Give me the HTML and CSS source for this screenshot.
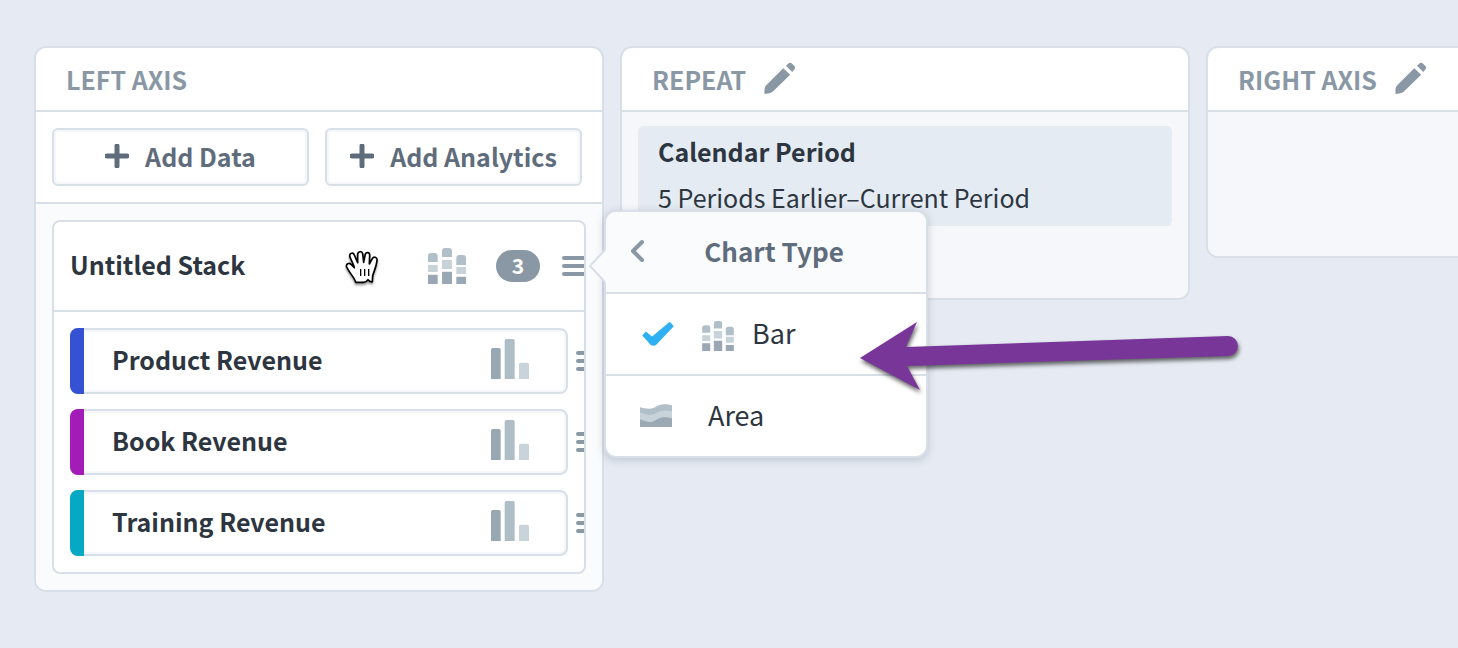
FILE: index.html
```html
<!DOCTYPE html>
<html lang="en">
<head>
  <meta charset="UTF-8" />
  <meta name="viewport" content="width=device-width, initial-scale=1.0" />
  <title>Chart Builder</title>
  <link rel="stylesheet" href="styles.css">
</head>
<body>
  <!-- shared icons -->
  <svg class="sprite" aria-hidden="true">
    <symbol id="plus" viewBox="0 0 24 24">
      <path d="M12 2v20M2 12h20" fill="none" stroke="currentColor" stroke-width="5" stroke-linecap="round" />
    </symbol>
    <symbol id="pencil" viewBox="434 67 93 93">
      <path d="M490 85L510 104L460 153Q456 158 437 160Q434 160 436 143Q437 137 442 133Z" fill="currentColor" />
      <path d="M498 78L505 71Q510 67 515 71L523 79Q527 84 522 89L516 96Z" fill="currentColor" />
    </symbol>
    <symbol id="menu" viewBox="0 0 26 20">
      <path d="M2 2h22M2 10h22M2 18h22" stroke="currentColor" stroke-width="4" stroke-linecap="round" />
    </symbol>
    <symbol id="stacked" viewBox="0 0 114 108">
      <path d="M0 42V24Q0 15 9 15H20Q29 15 29 24V42ZM42 27V9Q42 0 51 0H63Q72 0 72 9V27ZM85 51V30Q85 21 94 21H105Q114 21 114 30V51Z" fill="#b1bfc8" />
      <path d="M0 51H29V72H0ZM42 36H72V63H42ZM85 57H114V78H85Z" fill="#c7d2d9" />
      <path d="M0 80H29V108H0ZM42 71H72V108H42ZM85 86H114V108H85Z" fill="#9aa8b5" />
    </symbol>
    <symbol id="bars" viewBox="0 0 114 120">
      <path d="M0 120V32Q0 27 5 27H24Q29 27 29 32V120Z" fill="#98a8b3" />
      <path d="M41 120V5Q41 0 46 0H66Q71 0 71 5V120Z" fill="#afbdc7" />
      <path d="M84 120V76Q84 71 89 71H109Q114 71 114 76V120Z" fill="#c8d3da" />
    </symbol>
    <symbol id="area" viewBox="0 0 96 69">
      <path d="M0 10Q26 18 42 11C56 4 66-4 96 4V69H0Z" fill="#b1bfc8" />
      <path d="M0 25Q26 38 42 30C56 23 66 15 96 22V69H0Z" fill="#c7d2d9" />
      <path d="M0 46Q26 59 42 51C56 44 66 35 96 43V69H0Z" fill="#9aa9b3" />
    </symbol>
    <symbol id="check" viewBox="126 365 96 73">
      <path d="M126 406L137 394L156 409L208 366Q211 365 213 367L222 378L168 435Q160 440 152 435Z" fill="#2fb0f2" />
    </symbol>
  </svg>

  <main class="board">
    <section class="panel">
      <header class="panel-head">
        <h2>LEFT AXIS</h2>
      </header>
      <div class="toolbar">
        <button class="button"><svg class="i-plus"><use href="#plus" /></svg>Add Data</button>
        <button class="button"><svg class="i-plus"><use href="#plus" /></svg>Add Analytics</button>
      </div>
      <div class="panel-body stacks">
        <div class="stack">
          <div class="stack-head">
            <h3>Untitled Stack</h3>
            <svg class="i-stacked"><use href="#stacked" /></svg>
            <span class="badge">3</span>
            <button class="menu-btn" aria-label="Stack menu"><svg class="i-menu"><use href="#menu" /></svg></button>
            <svg class="hand" viewBox="46 88 102 102">
              <path d="M78 185C77 174 60 158 51 139C48 129 58 125 65 132L74 141C71 128 62 116 60 106C60 96 71 95 74 103L84 126L84 100C86 91 97 91 99 99L102 125L107 100C110 93 121 95 120 104L119 130L128 114C133 106 144 110 142 120C140 140 131 156 129 166L128 183Q121 185 115 177Q109 187 99 185Z" fill="#fff" stroke="#000" stroke-width="5" stroke-linejoin="round" />
              <path d="M93 145V166M105 145V166M117 145V166" stroke="#000" stroke-width="4" />
            </svg>
          </div>
          <ul class="metrics">
            <li class="row">
              <div class="metric blue">Product Revenue<svg class="i-bars"><use href="#bars" /></svg></div>
              <button class="menu-btn" aria-label="Product Revenue menu"><svg class="i-menu"><use href="#menu" /></svg></button>
            </li>
            <li class="row">
              <div class="metric purple">Book Revenue<svg class="i-bars"><use href="#bars" /></svg></div>
              <button class="menu-btn" aria-label="Book Revenue menu"><svg class="i-menu"><use href="#menu" /></svg></button>
            </li>
            <li class="row">
              <div class="metric teal">Training Revenue<svg class="i-bars"><use href="#bars" /></svg></div>
              <button class="menu-btn" aria-label="Training Revenue menu"><svg class="i-menu"><use href="#menu" /></svg></button>
            </li>
          </ul>
        </div>
      </div>

      <div class="popover">
        <svg class="caret" viewBox="0 0 18 36">
          <path d="M18 1L2 18L18 35Z" fill="#fafbfd" />
          <path d="M17 2L2 18L17 34" fill="none" stroke="#d8dfe8" stroke-width="2" />
        </svg>
        <div class="popover-head">
          <button class="back" aria-label="Back">
            <svg viewBox="0 0 14 24"><path d="M12 3L3 12L12 21" fill="none" stroke="currentColor" stroke-width="4" stroke-linecap="round" stroke-linejoin="round" /></svg>
          </button>
          <h3>Chart Type</h3>
        </div>
        <button class="option selected">
          <svg class="i-check"><use href="#check" /></svg>
          <svg class="i-type"><use href="#stacked" /></svg>
          Bar
        </button>
        <button class="option">
          <svg class="i-area"><use href="#area" /></svg>
          Area
        </button>
      </div>
    </section>

    <section class="panel">
      <header class="panel-head">
        <h2>REPEAT</h2>
        <button class="edit" aria-label="Edit repeat"><svg><use href="#pencil" /></svg></button>
      </header>
      <div class="panel-body repeat">
        <div class="period">
          <strong>Calendar Period</strong>
          <span>5 Periods Earlier–Current Period</span>
        </div>
      </div>
    </section>

    <section class="panel">
      <header class="panel-head">
        <h2>RIGHT AXIS</h2>
        <button class="edit" aria-label="Edit right axis"><svg><use href="#pencil" /></svg></button>
      </header>
      <div class="panel-body empty"></div>
    </section>
  </main>

  <svg class="pointer" viewBox="0 0 400 90">
    <path d="M10 48L67 12L56 37L378 26A10 10 0 0 1 378 46L57 56L70 80Z" fill="#783698" />
  </svg>
</body>
</html>
```
FILE: styles.css
```css
* {
  box-sizing: border-box;
}

body {
  margin: 0;
  background: #e6ebf3;
  color: #2d3640;
  font-family: "Noto Sans CJK SC", "Noto Sans", sans-serif;
  font-size: 25px;
  line-height: 36px;
  position: relative;
}

h2, h3, ul {
  margin: 0;
  padding: 0;
  font-size: inherit;
}

button {
  font: inherit;
  color: inherit;
  background: none;
  border: none;
  padding: 0;
  cursor: pointer;
}

svg {
  display: block;
  flex: none;
}

.sprite {
  position: absolute;
  width: 0;
  height: 0;
}

.board {
  display: grid;
  grid-auto-flow: column;
  grid-auto-columns: minmax(570px, 39%);
  gap: 16px;
  align-items: start;
  padding: 46px 0 56px 34px;
  overflow: hidden;
}

.panel {
  position: relative;
  background: #fff;
  border: 2px solid #d8dfe8;
  border-radius: 12px;
}

.panel-head {
  display: flex;
  align-items: center;
  gap: 18px;
  height: 64px;
  padding: 0 30px;
  border-bottom: 2px solid #d8dfe8;
  color: #8a98a6;
}

.edit {
  padding-bottom: 2px;
}

.edit svg {
  width: 32px;
  height: 32px;
}

.toolbar {
  display: flex;
  gap: 16px;
  padding: 16px 20px 16px 16px;
  border-bottom: 2px solid #d8dfe8;
}

.button {
  display: flex;
  flex: 1;
  align-items: center;
  justify-content: center;
  gap: 16px;
  height: 58px;
  padding-bottom: 3px;
  border: 2px solid #d8dfe8;
  border-radius: 6px;
  box-shadow: inset 0 0 0 2px #f5f7fb;
  color: #5f6c7b;
  font-weight: bold;
}

.i-plus {
  width: 24px;
  height: 24px;
}

.panel-body {
  background: #f5f7fb;
  border-radius: 0 0 10px 10px;
}

.stacks {
  padding: 16px;
  background: #fafbfd;
}

.stack {
  overflow: hidden;
  background: #fff;
  border: 2px solid #d8dfe8;
  border-radius: 8px;
}

.stack-head {
  position: relative;
  display: flex;
  align-items: center;
  height: 90px;
  padding-left: 16px;
  border-bottom: 2px solid #d8dfe8;
}

.stack-head h3 {
  flex: 1;
  padding-bottom: 4px;
}

.i-stacked {
  width: 38px;
  height: 36px;
}

.badge {
  width: 44px;
  height: 32px;
  margin: 0 22px 0 30px;
  border-radius: 16px;
  background: #8a98a6;
  color: #fff;
  font-size: 21px;
  font-weight: bold;
  line-height: 30px;
  text-align: center;
}

.menu-btn {
  flex: 0 0 22px;
  min-width: 0;
  color: #8a98a6;
}

.i-menu {
  width: 26px;
  height: 20px;
}

/* grab cursor over the stack header */
.hand {
  position: absolute;
  top: 28px;
  left: 291px;
  width: 34px;
  height: 34px;
  filter: drop-shadow(0 2px 1px rgba(0, 0, 0, 0.4));
}

.metrics {
  display: grid;
  gap: 15px;
  padding: 16px;
  list-style: none;
}

.row {
  display: flex;
  align-items: center;
  gap: 8px;
}

.metric {
  position: relative;
  display: flex;
  flex: 0 0 100%;
  align-items: center;
  justify-content: space-between;
  height: 66px;
  padding: 0 37px 4px 40px;
  border: 2px solid #d8dfe8;
  border-radius: 8px;
  box-shadow: inset 0 0 0 2px #f5f7fb;
  font-weight: bold;
}

/* series colour strip, covers the left border */
.metric::before {
  content: "";
  position: absolute;
  top: -2px;
  bottom: -2px;
  left: -2px;
  width: 14px;
  border-radius: 8px 0 0 8px;
}

.blue::before { background: #3552d2; }
.purple::before { background: #a31cb8; }
.teal::before { background: #05a9c4; }

.i-bars {
  width: 38px;
  height: 40px;
}

.popover {
  position: absolute;
  z-index: 2;
  top: 162px;
  left: calc(100% + 2px);
  width: 324px;
  background: #fff;
  border: 2px solid #d8dfe8;
  border-radius: 12px;
  box-shadow: 0 2px 8px rgba(70, 85, 105, 0.25);
}

.caret {
  position: absolute;
  top: 36px;
  left: -18px;
  width: 18px;
  height: 36px;
}

.popover-head {
  display: flex;
  align-items: center;
  height: 82px;
  padding: 0 22px 3px 24px;
  border-bottom: 2px solid #d8dfe8;
  border-radius: 10px 10px 0 0;
  background: #fafbfd;
  color: #5f6c7b;
  font-size: 26px;
}

.popover-head h3 {
  flex: 1;
  text-align: center;
}

.back {
  color: #8a98a6;
}

.back svg {
  width: 14px;
  height: 24px;
}

.option {
  display: flex;
  align-items: center;
  width: 100%;
  height: 80px;
  padding: 0 34px 3px;
  font-size: 27px;
}

.selected {
  height: 82px;
  border-bottom: 2px solid #d8dfe8;
}

.i-check {
  width: 32px;
  height: 24px;
  margin: 2px 28px 0 2px;
}

.i-type {
  width: 32px;
  height: 30px;
  margin: 6px 18px 0 0;
}

.i-area {
  width: 32px;
  height: 23px;
  margin: 2px 36px 0 0;
}

.repeat {
  height: 186px;
  padding: 14px 16px;
}

.period {
  display: flex;
  flex-direction: column;
  gap: 10px;
  height: 100px;
  padding: 7px 20px;
  border-radius: 6px;
  background: #e4ebf2;
  box-shadow: inset 0 0 0 2px #e6ecf1;
}

.empty {
  height: 144px;
}

.pointer {
  position: absolute;
  z-index: 3;
  top: 310px;
  left: 850px;
  width: 400px;
  height: 90px;
  filter: drop-shadow(1px 3px 2px rgba(0, 0, 0, 0.6));
}
```
